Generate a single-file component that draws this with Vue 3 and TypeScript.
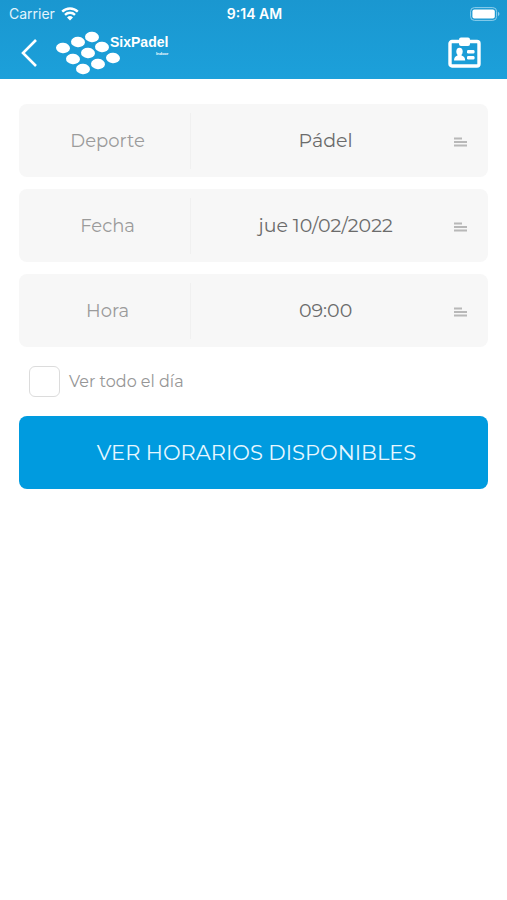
<script setup lang="ts">
import { ref } from 'vue'

interface Field {
  id: string
  label: string
  value: string
  options: string[]
}

const fields = ref<Field[]>([
  { id: 'deporte', label: 'Deporte', value: 'Pádel', options: ['Pádel'] },
  { id: 'fecha', label: 'Fecha', value: 'jue 10/02/2022', options: ['jue 10/02/2022'] },
  { id: 'hora', label: 'Hora', value: '09:00', options: ['09:00'] },
])

const allDay = ref(false)

const logoDots: [number, number][] = [
  [36, 6], [22, 11], [46, 16], [7, 17], [32, 22], [57, 27], [17, 28], [42, 33], [27, 38],
]
</script>

<template>
  <div class="screen">
    <header class="header">
      <div class="status">
        <span class="carrier">
          Carrier
          <svg class="wifi" viewBox="0 0 18 14" aria-hidden="true">
            <path d="M1.2 4.6a11.2 11.2 0 0 1 15.6 0M4 7.8a7.2 7.2 0 0 1 10 0" />
            <path class="wifi-tip" d="M9 13.6 6 10.500a4.300 4.300 0 0 1 6 0z" />
          </svg>
        </span>
        <span class="clock">9:14 AM</span>
        <svg class="battery" viewBox="0 0 30 14" aria-hidden="true">
          <rect class="battery-case" x="0.600" y="0.600" width="26" height="12.800" rx="3.800" />
          <rect x="2.400" y="2.400" width="22.400" height="9.200" rx="2" />
          <path class="battery-cap" d="M28 4.800q3 2.200 0 4.400z" />
        </svg>
      </div>
      <nav class="bar">
        <button class="back" type="button" aria-label="Volver">
          <svg viewBox="0 0 16 28" aria-hidden="true"><path d="M15 1 2 14l13 13" /></svg>
        </button>
        <div class="logo">
          <svg class="logo-mark" viewBox="0 0 64 44" aria-hidden="true">
            <ellipse
              v-for="[x, y] in logoDots"
              :key="`${x}-${y}`"
              :cx="x"
              :cy="y"
              rx="7"
              ry="5.2"
              :transform="`rotate(5 ${x} ${y})`"
            />
          </svg>
          <div class="logo-text">
            <span class="logo-name">SixPadel</span>
            <span class="logo-sub">Indoor</span>
          </div>
        </div>
        <button class="profile" type="button" aria-label="Perfil">
          <svg viewBox="0 0 34 32" aria-hidden="true">
            <rect class="card" x="2" y="4.500" width="29" height="24.500" rx="2" />
            <rect x="11" y="0.500" width="11" height="8.500" rx="2" />
            <ellipse cx="11.500" cy="14.500" rx="3.200" ry="3.800" />
            <path d="M9.500 16h4v2.500q3.700 1 3.700 5H6q0-4 3.500-5z" />
            <rect x="19" y="13" width="7.500" height="3.400" rx="1.200" />
            <rect x="19" y="19" width="7.500" height="3.400" rx="1.200" />
          </svg>
        </button>
      </nav>
    </header>

    <form class="form" @submit.prevent>
      <div class="fields">
        <div v-for="field in fields" :key="field.id" class="field">
          <label class="field-label" :for="field.id">{{ field.label }}</label>
          <div class="field-value">
            <select :id="field.id" v-model="field.value">
              <option v-for="option in field.options" :key="option" :value="option">{{ option }}</option>
            </select>
            <svg class="lines" viewBox="0 0 14 10" aria-hidden="true">
              <path d="M0 1.500h8M0 5h13M0 8.500h13" />
            </svg>
          </div>
        </div>
      </div>
      <label class="all-day">
        <input v-model="allDay" type="checkbox" />
        <span>Ver todo el día</span>
      </label>
      <button class="submit" type="submit">VER HORARIOS DISPONIBLES</button>
    </form>
  </div>
</template>

<style>
body {
  margin: 0;
  background: #fff;
}
</style>

<style scoped>
.screen {
  min-height: 100vh;
  background: #fff;
  font-family: Montserrat, Inter, "Liberation Sans", sans-serif;
}

button {
  padding: 0;
  border: 0;
  background: none;
  color: inherit;
  font: inherit;
  cursor: pointer;
}

svg {
  display: block;
  fill: #fff;
}

.header {
  color: #fff;
  background: linear-gradient(#1a97d0, #1ca0da);
}

.status {
  display: grid;
  grid-template-columns: 1fr auto 1fr;
  align-items: center;
  height: 27px;
  padding: 0 7px 0 9px;
  font-family: Inter, sans-serif;
  font-size: 14px;
}

.carrier {
  display: flex;
  align-items: center;
  gap: 6px;
  color: #e2f4fc;
}

.clock {
  font-weight: 600;
}

.wifi {
  width: 18px;
  height: 14px;
}

.wifi path {
  fill: none;
  stroke: #fff;
  stroke-width: 2.4;
}

.wifi .wifi-tip {
  fill: #fff;
  stroke: none;
}

.battery {
  justify-self: end;
  width: 30px;
  height: 14px;
}

.battery-case {
  fill: none;
  stroke: #8fcfec;
}

.battery .battery-cap {
  fill: #8fcfec;
}

.bar {
  display: flex;
  align-items: center;
  height: 52px;
  padding: 0 25px 0 21px;
}

.back svg {
  width: 16px;
  height: 28px;
  fill: none;
  stroke: #fff;
  stroke-width: 2.6;
}

.logo {
  display: flex;
  flex: 1;
  margin-left: 19px;
}

.logo-mark {
  width: 64px;
  height: 44px;
}

.logo-text {
  display: flex;
  flex-direction: column;
  margin-left: -10px;
  padding-top: 3px;
  font-family: "Liberation Sans", Arial, sans-serif;
  font-weight: 700;
}

.logo-name {
  font-size: 14px;
  line-height: 16px;
}

.logo-sub {
  align-self: flex-end;
  font-size: 4px;
  line-height: 8px;
}

.profile svg {
  width: 34px;
  height: 32px;
}

.profile .card {
  fill: none;
  stroke: #fff;
  stroke-width: 3.4;
}

.form {
  padding: 25px 19px;
}

.fields {
  display: flex;
  flex-direction: column;
  gap: 12px;
}

.field {
  display: flex;
  align-items: center;
  height: 73px;
  border-radius: 8px;
  background: #f7f7f7;
  font-size: 18px;
}

.field-label {
  box-sizing: border-box;
  width: 36.5%;
  padding-left: 6px;
  color: #9b9b9b;
  text-align: center;
}

.field-value {
  position: relative;
  flex: 1;
  border-left: 1px solid #f0f0f0;
  font-size: 19px;
}

.field-value select {
  appearance: none;
  display: block;
  width: 100%;
  height: 56px;
  padding: 0 28px 0 0;
  border: 0;
  background: transparent;
  color: #6b6b6b;
  font: inherit;
  text-align: center;
  text-align-last: center;
}

.lines {
  position: absolute;
  top: 24px;
  right: 20px;
  width: 14px;
  height: 10px;
  stroke: #b8b8b8;
  stroke-width: 2;
  pointer-events: none;
}

.all-day {
  display: flex;
  align-items: center;
  gap: 9px;
  margin: 19px 0 19px 10px;
  color: #969696;
  font-size: 16px;
}

.all-day input {
  appearance: none;
  width: 31px;
  height: 31px;
  margin: 0;
  border: 1px solid #dcdcdc;
  border-radius: 6px;
  background: #fff;
}

.all-day input:checked {
  background: #009bdf;
}

.submit {
  display: block;
  width: 100%;
  height: 73px;
  padding-left: 6px;
  border-radius: 8px;
  background: #009bdf;
  color: #e6f7ff;
  font-size: 21px;
}
</style>
